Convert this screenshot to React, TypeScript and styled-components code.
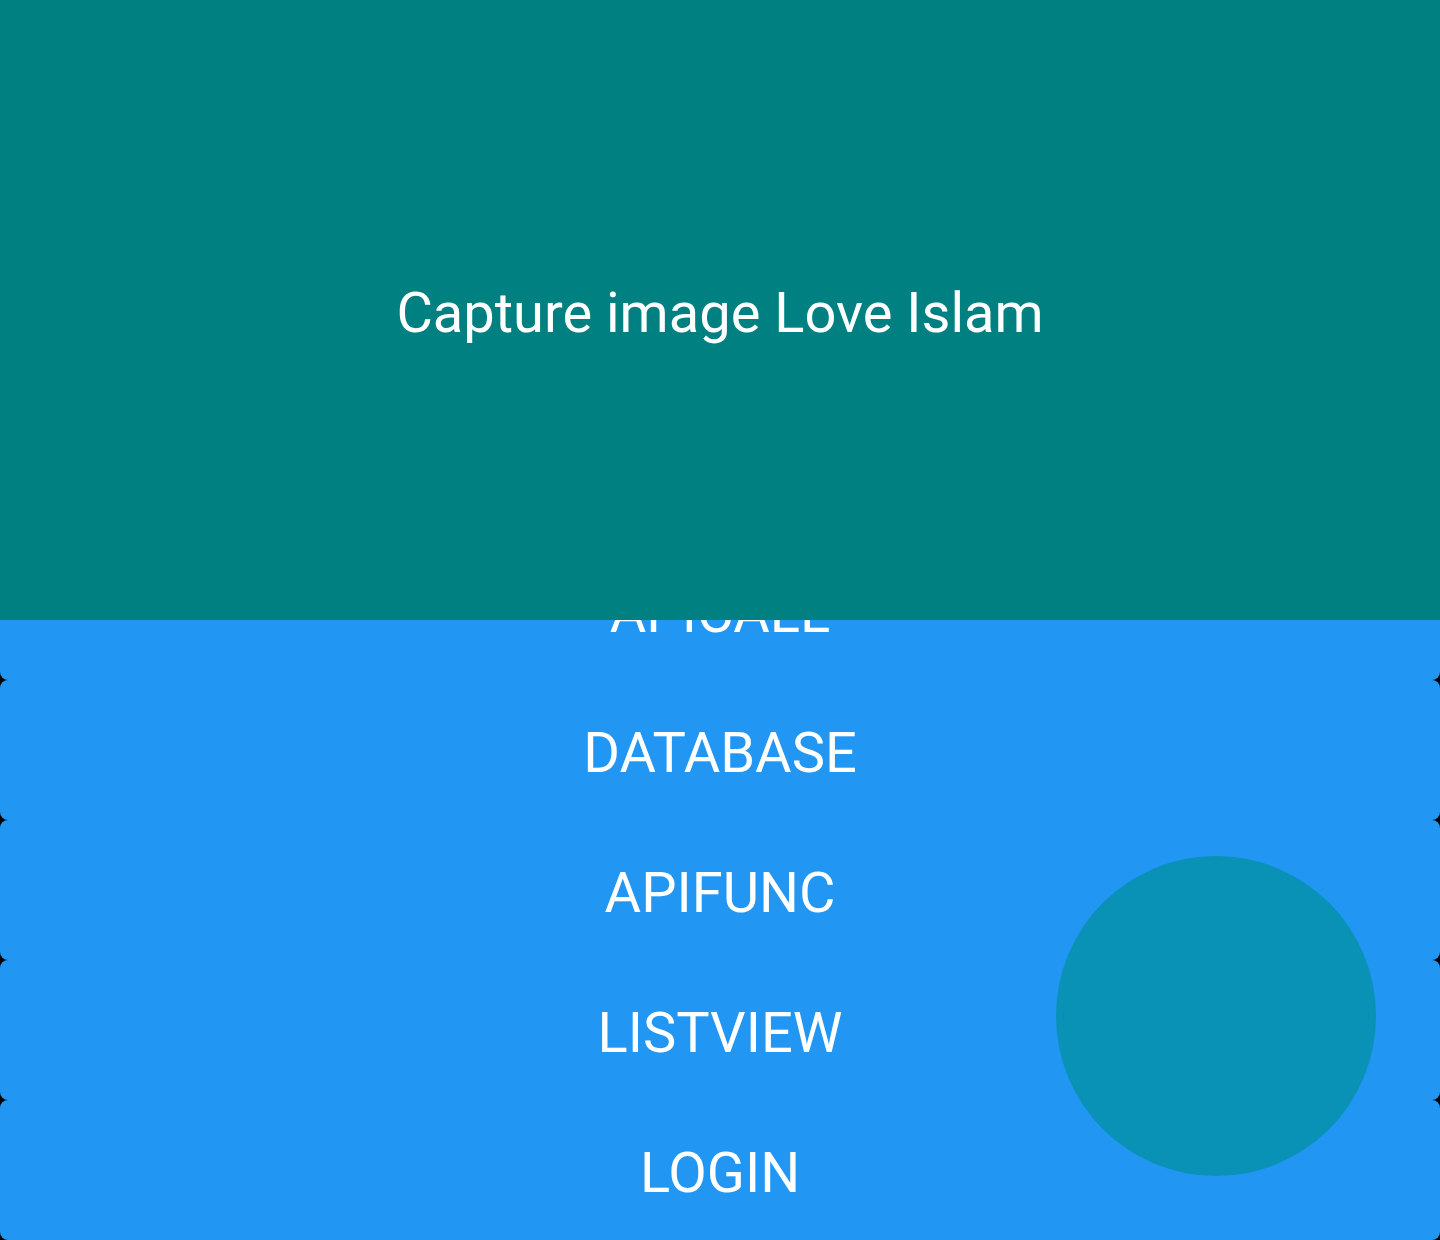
import React from "react";
import styled, { createGlobalStyle } from "styled-components";

const Global = createGlobalStyle`
  html, body { margin: 0; padding: 0; background: #000; }
  body { font-family: Roboto, "Liberation Sans", sans-serif; overflow: hidden; }
`;

const Screen = styled.div`
  position: relative;
  width: 1440px;
  height: 1240px;
  overflow: hidden;
  background: #000;
  display: flex;
  flex-direction: column;
`;

const Header = styled.header`
  position: relative;
  z-index: 2;
  height: 620px;
  box-sizing: border-box;
  padding-top: 6px;
  flex: none;
  background: #008080;
  display: flex;
  align-items: center;
  justify-content: center;
  color: #fff;
  font-size: 56px;
  font-weight: 400;
`;

const List = styled.div`
  display: flex;
  flex-direction: column;
  margin-top: -80px;
`;

const ActionButton = styled.button`
  height: 140px;
  flex: none;
  border: none;
  border-radius: 8px;
  background: #2196f3;
  color: #fff;
  font-family: Roboto, "Liberation Sans", sans-serif;
  font-size: 56px;
  font-weight: 400;
  text-transform: uppercase;
  display: flex;
  align-items: center;
  justify-content: center;
  padding: 0;
  padding-top: 5px;
  cursor: pointer;
`;

const Bubble = styled.div`
  position: absolute;
  z-index: 3;
  left: 1056px;
  top: 856px;
  width: 320px;
  height: 320px;
  border-radius: 50%;
  background: #0991b6;
`;

const items = ["apicall", "database", "apifunc", "listview", "login"];

export default function App() {
  return (
    <>
      <Global />
      <Screen>
        <Header>Capture image Love Islam</Header>
        <List>
          {items.map((i) => (
            <ActionButton key={i}>{i}</ActionButton>
          ))}
        </List>
        <Bubble />
      </Screen>
    </>
  );
}
